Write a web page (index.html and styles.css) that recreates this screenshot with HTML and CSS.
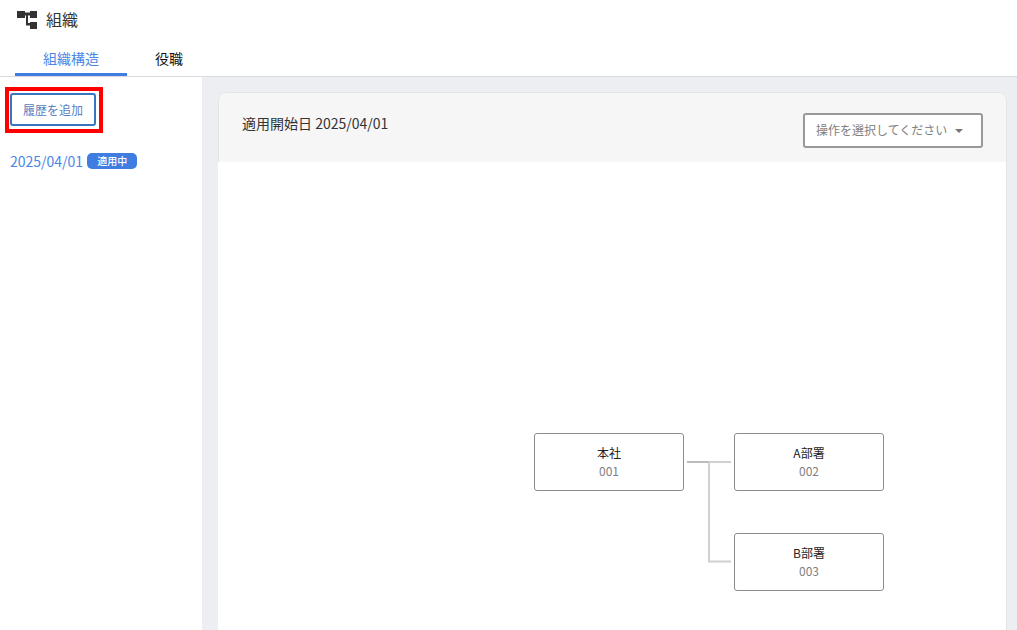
FILE: index.html
```html
<!DOCTYPE html>
<html lang="ja">
<head>
<meta charset="utf-8">
<title>組織</title>
<link rel="stylesheet" href="styles.css">
</head>
<body>
<header class="page-header">
  <div class="title-row">
    <svg class="title-icon" width="20" height="18" viewBox="0 0 20 18" aria-hidden="true">
      <path d="M0 0h8v7H0zM13 0h7v7h-7zM13 11h7v7h-7z" fill="#333"/>
      <path d="M8 1.500h5v3h-2v7.500h2v2.500H9V4.500H8z" fill="#333"/>
    </svg>
    <h1 class="title">組織</h1>
  </div>
  <nav class="tabs">
    <a class="tab tab-active">組織構造</a>
    <a class="tab">役職</a>
  </nav>
</header>
<div class="page-body">
  <aside class="sidebar">
    <div class="add-wrap">
      <button class="add-button">履歴を追加</button>
      <span class="highlight"></span>
    </div>
    <div class="history-item">
      <a class="history-date">2025/04/01</a>
      <span class="badge">適用中</span>
    </div>
  </aside>
  <main class="content">
    <section class="card">
      <div class="card-header">
        <div class="card-title">適用開始日 2025/04/01</div>
        <div class="select">
          <span>操作を選択してください</span>
          <span class="caret"></span>
        </div>
      </div>
      <div class="chart">
        <svg class="links" width="46" height="102" viewBox="0 0 46 102" aria-hidden="true">
          <path d="M0 1H22" fill="none" stroke="#bbbbbb" stroke-width="2"/>
          <path d="M22 1H44M22 1V100.500H44" fill="none" stroke="#d0d0d0" stroke-width="2"/>
        </svg>
        <div class="node node-root"><div class="node-name">本社</div><div class="node-code">001</div></div>
        <div class="node node-a"><div class="node-name">A部署</div><div class="node-code">002</div></div>
        <div class="node node-b"><div class="node-name">B部署</div><div class="node-code">003</div></div>
      </div>
    </section>
  </main>
</div>
</body>
</html>
```
FILE: styles.css
```css
* { box-sizing: border-box; }
html, body { margin: 0; height: 630px; overflow: hidden; }
body {
  font-family: "Noto Sans CJK JP", "Noto Sans", sans-serif;
  font-size: 14px;
  color: #333;
  background: #eceef1;
  display: flex;
  flex-direction: column;
}
.page-header {
  background: #fff;
  height: 77px;
  border-bottom: 1px solid #d8dbe0;
  padding-left: 15px;
  flex: none;
}
.title-row {
  display: flex;
  align-items: center;
  height: 40px;
  padding-left: 2px;
}
.title-icon { flex: none; }
.title {
  margin: -2px 0 0 9px;
  font-size: 16px;
  font-weight: 400;
  line-height: 20px;
}
.tabs { display: flex; height: 36px; }
.tab {
  padding: 0 28px;
  line-height: 36px;
  height: 36px;
  color: #111;
  font-size: 14px;
}
.tab-active {
  color: #4a86e8;
  border-bottom: 3px solid #3f7de0;
}
.page-body { flex: 1; display: flex; min-height: 0; }
.sidebar {
  width: 202px;
  flex: none;
  background: #fff;
  padding: 16px 0 0 10px;
}
.add-wrap { position: relative; width: 86px; }
.add-button {
  display: block;
  width: 86px;
  height: 33px;
  background: #fff;
  border: 2px solid #3a75c4;
  border-radius: 3px;
  color: #5a7fc0;
  font-family: inherit;
  font-size: 12px;
  padding: 0;
}
.highlight {
  position: absolute;
  left: -5px;
  top: -6px;
  width: 98px;
  height: 46px;
  border: 4px solid #ff0000;
  pointer-events: none;
}
.history-item {
  display: flex;
  align-items: center;
  margin-top: 25px;
  height: 20px;
}
.history-date { color: #4a86e8; font-size: 14px; }
.badge {
  margin-left: 4px;
  background: #3f7de0;
  color: #fff;
  font-size: 10px;
  font-weight: 500;
  line-height: 16px;
  height: 16px;
  width: 50px;
  text-align: center;
  border-radius: 5px;
}
.content {
  flex: 1;
  padding: 15px 10px 0 16px;
  min-width: 0;
}
.card {
  background: #fff;
  border-radius: 8px 8px 0 0;
  height: 100%;
  overflow: hidden;
  display: flex;
  flex-direction: column;
}
.card-header {
  height: 70px;
  background: #f6f6f7;
  flex: none;
  display: flex;
  justify-content: space-between;
  align-items: flex-start;
  padding: 20px 23px 0 23px;
  border: 1px solid #e3e4e8;
  border-bottom: 0;
  border-radius: 8px 8px 0 0;
}
.card-title { line-height: 20px; font-size: 14px; color: #333; }
.select {
  width: 180px;
  height: 35px;
  background: #fff;
  border: 2px solid #999;
  border-radius: 3px;
  display: flex;
  align-items: center;
  padding: 0 0 2px 11px;
  color: #808080;
  font-size: 12px;
}
.caret {
  margin: 2px 0 0 8px;
  width: 0;
  height: 0;
  border-left: 4px solid transparent;
  border-right: 4px solid transparent;
  border-top: 4px solid #777;
}
.chart {
  position: relative;
  flex: 1;
  border-right: 1px solid #e3e4e8;
}
.node {
  position: absolute;
  width: 150px;
  height: 58px;
  background: #fff;
  border: 1px solid #8c8c8c;
  border-radius: 3px;
  text-align: center;
  padding-top: 10px;
}
.node-root { left: 316px; top: 271px; }
.node-a { left: 516px; top: 271px; }
.node-b { left: 516px; top: 371px; }
.node-name { font-size: 12px; line-height: 18px; color: #222; }
.node-code { font-size: 12px; line-height: 18px; color: #808080; }
.links { position: absolute; left: 469px; top: 299px; overflow: visible; }
```
